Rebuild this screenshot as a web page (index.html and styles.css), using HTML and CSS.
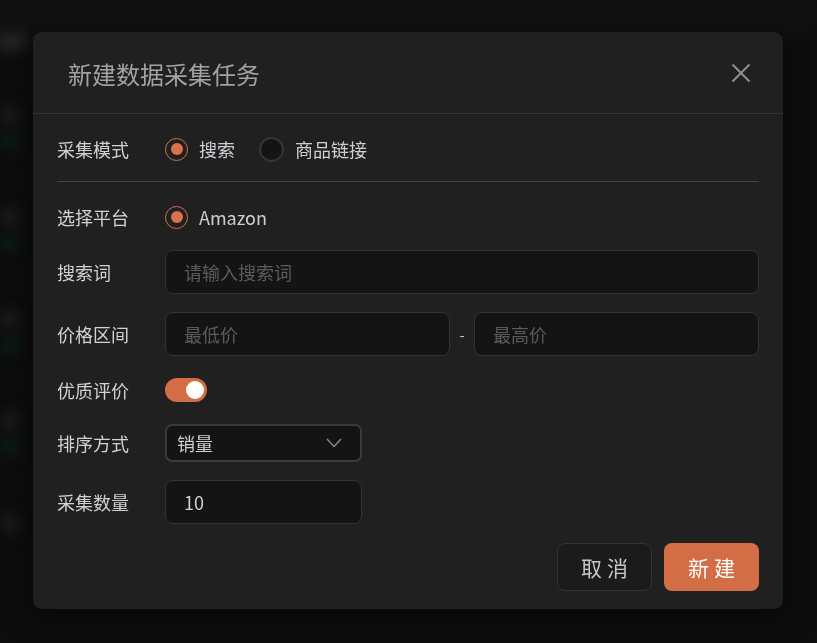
FILE: index.html
```html
<!DOCTYPE html>
<html lang="zh-CN">
<head>
<meta charset="utf-8">
<title>新建数据采集任务</title>
<link rel="stylesheet" href="styles.css">
</head>
<body>
<div class="backdrop">
  <div class="bg-top"><span class="bg-pill"></span></div>
  <div class="bg-list">
    <div class="bg-row"><span class="bg-dot"></span><span class="bg-green"></span></div>
    <div class="bg-row"><span class="bg-dot"></span><span class="bg-green"></span></div>
    <div class="bg-row"><span class="bg-dot"></span><span class="bg-green"></span></div>
    <div class="bg-row"><span class="bg-dot"></span><span class="bg-green"></span></div>
    <div class="bg-row"><span class="bg-dot"></span></div>
  </div>
</div>

<div class="overlay">
  <div class="modal">
    <div class="modal-header">
      <h2 class="modal-title">新建数据采集任务</h2>
      <button class="close-btn" aria-label="关闭">
        <svg width="20" height="20" viewBox="0 0 20 20"><path d="M1.5 1.5 L18.5 18.5 M18.5 1.5 L1.5 18.5" stroke="#8b8e93" stroke-width="2" fill="none"/></svg>
      </button>
    </div>
    <div class="modal-body">
      <div class="row mode-row">
        <div class="label">采集模式</div>
        <div class="radios">
          <label class="radio"><span class="dot checked"></span><span class="radio-text">搜索</span></label>
          <label class="radio"><span class="dot"></span><span class="radio-text">商品链接</span></label>
        </div>
      </div>
      <div class="divider"></div>
      <div class="form">
        <div class="row platform-row">
          <div class="label">选择平台</div>
          <label class="radio"><span class="dot checked"></span><span class="radio-text">Amazon</span></label>
        </div>
        <div class="row">
          <div class="label">搜索词</div>
          <div class="input grow"><span class="placeholder">请输入搜索词</span></div>
        </div>
        <div class="row">
          <div class="label">价格区间</div>
          <div class="range">
            <div class="input grow"><span class="placeholder">最低价</span></div>
            <span class="dash">-</span>
            <div class="input grow"><span class="placeholder">最高价</span></div>
          </div>
        </div>
        <div class="row toggle-row">
          <div class="label">优质评价</div>
          <span class="toggle"><span class="knob"></span></span>
        </div>
        <div class="row sort-row">
          <div class="label">排序方式</div>
          <div class="select">
            <span class="value">销量</span>
            <svg width="16" height="10" viewBox="0 0 16 10"><path d="M1 1 L8 8.5 L15 1" stroke="#8a8a8a" stroke-width="1.4" fill="none"/></svg>
          </div>
        </div>
        <div class="row">
          <div class="label">采集数量</div>
          <div class="input short"><span class="value">10</span></div>
        </div>
        <div class="footer">
          <button class="btn btn-cancel">取消</button>
          <button class="btn btn-primary">新建</button>
        </div>
      </div>
    </div>
  </div>
</div>
</body>
</html>
```

FILE: styles.css
```css
* { box-sizing: border-box; }

html, body {
  margin: 0;
  height: 100%;
}

body {
  background: #0d0d0d;
  font-family: "Noto Sans CJK SC", "Noto Sans", sans-serif;
  overflow: hidden;
}

/* blurred page behind the dialog */
.backdrop {
  height: 100%;
  filter: blur(7px);
}

.bg-top {
  height: 36px;
  background: #111111;
  padding-top: 34px;
}

.bg-pill {
  display: block;
  width: 30px;
  height: 16px;
  border-radius: 8px;
  background: #2a2a2a;
  margin-left: -4px;
}

.bg-list {
  padding-top: 71px;
  display: flex;
  flex-direction: column;
  gap: 62px;
}

.bg-row {
  display: flex;
  flex-direction: column;
  gap: 12px;
}

.bg-dot {
  display: block;
  width: 20px;
  height: 16px;
  border-radius: 8px;
  background: #1f1f1f;
}

.bg-green {
  display: block;
  width: 20px;
  height: 12px;
  background: #0b2216;
}

/* dialog overlay */
.overlay {
  position: fixed;
  inset: 0;
  display: flex;
  align-items: center;
  justify-content: center;
  padding: 0 1px 2px 0;
}

.modal {
  width: 750px;
  background: #202020;
  border-radius: 9px;
  box-shadow: 0 6px 30px rgba(0, 0, 0, 0.6);
}

.modal-header {
  height: 82px;
  border-bottom: 1px solid #333333;
  display: flex;
  align-items: center;
  justify-content: space-between;
  padding: 0 32px 0 35px;
}

.modal-title {
  margin: 0;
  font-size: 24px;
  font-weight: 400;
  color: #a3a3a3;
  letter-spacing: 0;
  line-height: 1;
  margin-top: 2px;
}

.close-btn {
  background: none;
  border: 0;
  padding: 0;
  width: 20px;
  height: 20px;
  display: flex;
}

.modal-body {
  padding: 13px 24px 18px 24px;
}

.row {
  display: flex;
  align-items: center;
  height: 44px;
}

.label {
  width: 108px;
  flex: none;
  font-size: 18px;
  color: #d2d2d2;
  line-height: 1;
}

.radios {
  display: flex;
  align-items: center;
  gap: 24px;
}

.radio {
  display: flex;
  align-items: center;
  gap: 11px;
}

.dot {
  width: 25px;
  height: 25px;
  border-radius: 50%;
  border: 2px solid #363636;
  background: #141414;
  display: flex;
  align-items: center;
  justify-content: center;
}

.dot.checked {
  width: 23px;
  height: 23px;
  border: 1.5px solid #d4704a;
  background: transparent;
}

.dot.checked::after {
  content: "";
  width: 12px;
  height: 12px;
  border-radius: 50%;
  background: #d9714a;
}

.radio-text {
  font-size: 18px;
  color: #ccd0d4;
  line-height: 1;
}

.divider {
  height: 1px;
  background: #444444;
  margin-top: 10px;
}

.form {
  margin-top: 20px;
  display: flex;
  flex-direction: column;
  gap: 18px;
}

.platform-row { height: 30px; }
.toggle-row { height: 32px; }
.sort-row { height: 38px; }

.input {
  height: 44px;
  background: #141414;
  border: 1px solid #333333;
  border-radius: 8px;
  display: flex;
  align-items: center;
  padding: 0 18px;
}

.grow { flex: 1; }

.short { width: 197px; }

.placeholder {
  font-size: 18px;
  color: #5b5b5b;
}

.value {
  font-size: 18px;
  color: #d0d0d0;
}

.range {
  flex: 1;
  display: flex;
  align-items: center;
}

.dash {
  width: 24px;
  text-align: center;
  color: #c8c8c8;
  font-size: 15px;
}

.toggle {
  width: 42px;
  height: 24px;
  border-radius: 12px;
  background: #d36d45;
  display: flex;
  align-items: center;
  justify-content: flex-end;
  padding-right: 3px;
}

.knob {
  width: 18px;
  height: 18px;
  border-radius: 50%;
  background: #ffffff;
}

.select {
  width: 197px;
  height: 38px;
  background: #141414;
  border: 2px solid #3a3a3a;
  border-radius: 7px;
  display: flex;
  align-items: center;
  justify-content: space-between;
  padding: 0 18px 0 10px;
}

.footer {
  display: flex;
  justify-content: flex-end;
  gap: 12px;
  margin-top: 1px;
}

.btn {
  width: 95px;
  height: 48px;
  border-radius: 8px;
  font-family: "Noto Sans CJK SC", "Noto Sans", sans-serif;
  font-size: 21px;
  letter-spacing: 5px;
  text-indent: 5px;
  padding: 0;
}

.btn-cancel {
  background: #1b1b1b;
  border: 1px solid #333333;
  color: #c4c8cc;
}

.btn-primary {
  background: #d36d45;
  border: 0;
  color: #ffffff;
}
```
